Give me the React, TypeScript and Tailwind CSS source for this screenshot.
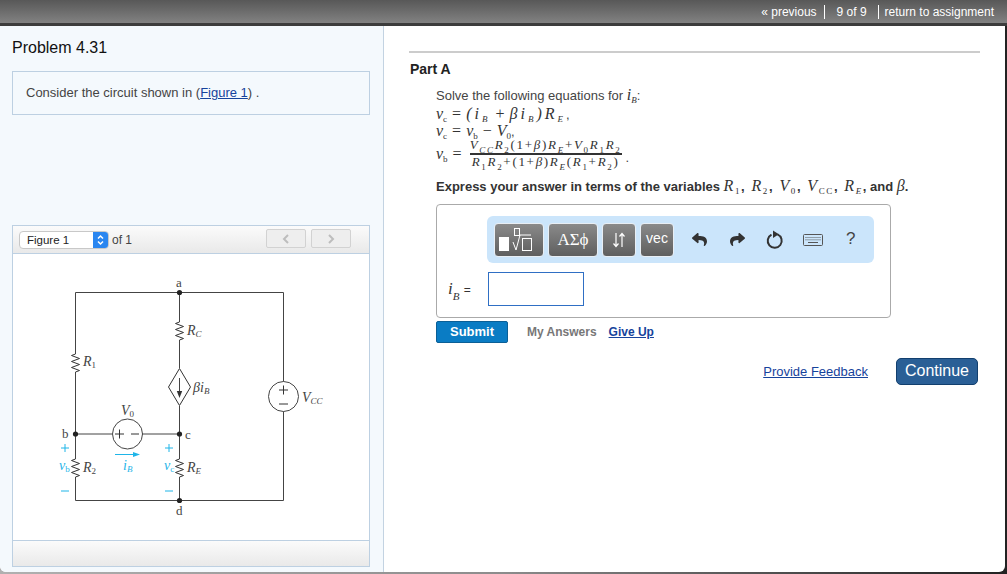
import { ReactNode } from "react";
import { FaReply, FaShare } from "react-icons/fa";

const serif = "font-['Liberation_Serif',serif]";

function V({ children, sub, upright }: { children: ReactNode; sub?: string; upright?: boolean }) {
  return (
    <span className={`${serif} italic font-normal text-[16px] text-[#333]`}>
      {children}
      {sub && <sub className={`text-[9px] align-[-1px] leading-none ${upright ? "not-italic" : ""}`}>{sub}</sub>}
    </span>
  );
}

function Op({ children }: { children: ReactNode }) {
  return <span className={`${serif} text-[16px] text-[#333] mx-[5px]`}>{children}</span>;
}

function S({ children, upright }: { children: ReactNode; upright?: boolean }) {
  return <sub className={`text-[9px] align-[-2px] leading-none ${upright ? "not-italic" : ""}`}>{children}</sub>;
}

function Resistor({ x, y }: { x: number; y: number }) {
  return (
    <path
      d={`M${x} ${y} l-4 1.5 l8 3 l-8 3 l8 3 l-8 3 l8 3 l-4 1.5`}
      fill="none"
      stroke="#333"
      strokeWidth="1"
    />
  );
}

function Circuit() {
  const it = { fontFamily: "'Liberation Serif', serif", fontStyle: "italic" as const };
  const rm = { fontFamily: "'Liberation Serif', serif", fontStyle: "normal" as const };
  const blue = "#1fb5e8";
  return (
    <svg viewBox="13 254 356 286" className="w-full h-full block">
      <g fill="none" stroke="#444" strokeWidth="1">
        <path d="M75.5 354V292.5H283.5V381.5M179.5 292.5V322M179.5 340V368M179.5 406V459M179.5 477V500.5M75.5 372V459M75.5 477V500.5H283.5V411.5M75.5 434H112M142 434H179.5" />
        <path d="M179.5 368.5L190.5 387L179.5 405.5L168.5 387Z" stroke="#333" />
        <circle cx="283.5" cy="396.5" r="15" />
        <circle cx="127.5" cy="434" r="15" />
        <path d="M179.5 378V394" />
      </g>
      <path d="M179.5 398L176.8 391H182.2Z" fill="#333" />
      <Resistor x={179.5} y={322} />
      <Resistor x={75.5} y={354} />
      <Resistor x={75.5} y={459} />
      <Resistor x={179.5} y={459} />
      <g fill="#222">
        <circle cx="179.5" cy="292.5" r="2.6" />
        <circle cx="75.5" cy="434" r="2.6" />
        <circle cx="179.5" cy="434" r="2.6" />
        <circle cx="179.5" cy="500.5" r="2.6" />
      </g>
      <path d="M115 454.5H134" stroke={blue} strokeWidth="1" />
      <path d="M140 454.5L133 452V457Z" fill={blue} />
      <g fontSize="13" fill="#444" style={rm}>
        <text x="176" y="287">a</text>
        <text x="62" y="438">b</text>
        <text x="185" y="439">c</text>
        <text x="176" y="515">d</text>
      </g>
      <g fill="#444" style={it} fontSize="14">
        <text x="187" y="335">R<tspan fontSize="9" dy="2">C</tspan></text>
        <text x="83" y="366">R<tspan fontSize="9" dy="2" style={rm}>1</tspan></text>
        <text x="193" y="392">βi<tspan fontSize="9" dy="2">B</tspan></text>
        <text x="302" y="402">V<tspan fontSize="9" dy="2">CC</tspan></text>
        <text x="121" y="415">V<tspan fontSize="9" dy="2" style={rm}>0</tspan></text>
        <text x="83" y="472">R<tspan fontSize="9" dy="2" style={rm}>2</tspan></text>
        <text x="187" y="472">R<tspan fontSize="9" dy="2">E</tspan></text>
      </g>
      <g fill={blue} style={it} fontSize="14">
        <text x="59" y="470">v<tspan fontSize="9" dy="2" style={rm}>b</tspan></text>
        <text x="164" y="470">v<tspan fontSize="9" dy="2" style={rm}>c</tspan></text>
        <text x="123" y="470">i<tspan fontSize="9" dy="2">B</tspan></text>
      </g>
      <g fill="none" stroke={blue} strokeWidth="1">
        <path d="M61 448H69M65 444V452M61 491H69M165 448H173M169 444V452M165 491H173" />
      </g>
      <g fill="none" stroke="#333" strokeWidth="1">
        <path d="M279 390H288M283.5 385.5V394.5M279 404H288M115 434H124M119.5 429.5V438.5M131 434H139" />
      </g>
    </svg>
  );
}

function ToolButton({ children, className }: { children: ReactNode; className: string }) {
  return (
    <div
      className={`h-[34px] rounded-[4px] border border-[#e8eef4] bg-gradient-to-b from-[#8a8a8a] to-[#5f5f5f] flex items-center justify-center text-white ${className}`}
    >
      {children}
    </div>
  );
}

export default function App() {
  return (
    <div className="w-[1007px] h-[574px] overflow-hidden bg-gradient-to-r from-[#b0b0b0] via-[#8c8c8c] to-[#222222] font-['Liberation_Sans',sans-serif]">
      <div className="h-[26px] flex items-center justify-end pr-[13px] bg-gradient-to-b from-[#585858] to-[#828282] border-b-[3px] border-[#3c3c3c] text-white text-[12px]">
        <span className="pr-[7px] border-r border-white leading-[14px]">« previous</span>
        <span className="pl-[12px] pr-[11px] border-r border-white leading-[14px]">9 of 9</span>
        <span className="pl-[6px] leading-[14px]">return to assignment</span>
      </div>
      <div className="w-[1005px] h-[546px] flex bg-white rounded-b-[6px] overflow-hidden">
        <div className="w-[384px] shrink-0 bg-[#f4f9fd] border-r border-[#c3d3e2] pl-[12px] pr-[13px] pt-[12px] pb-[5px] flex flex-col">
          <h1 className="text-[16px] leading-[20px] text-[#111]">Problem 4.31</h1>
          <div className="mt-[13px] h-[44px] border border-[#bdd0e2] pl-[13px] pt-[13px] text-[13px] leading-[15px] text-[#444]">
            Consider the circuit shown in (<a className="text-[#16439c] underline">Figure 1</a>) .
          </div>
          <div className="mt-[110px] flex-1 flex flex-col border border-[#bdd0e2] min-h-0">
            <div className="h-[28px] shrink-0 flex items-center pl-[6px] pr-[18px] border-b border-[#bdd0e2] bg-gradient-to-b from-[#fbfbfb] to-[#e9e9e9]">
              <div className="w-[90px] h-[18px] flex rounded-[4px] border border-[#c8c8c8] bg-white overflow-hidden">
                <span className="flex-1 pl-[7px] text-[11.5px] leading-[17px] text-[#222]">Figure 1</span>
                <span className="w-[15px] bg-[#2a86f0] flex items-center justify-center">
                  <svg width="9" height="12" viewBox="0 0 9 12" fill="none" stroke="white" strokeWidth="1.5">
                    <path d="M2 4.5L4.5 2L7 4.5M2 7.5L4.5 10L7 7.5" />
                  </svg>
                </span>
              </div>
              <span className="ml-[3px] text-[12px] text-[#444]">of 1</span>
              <div className="ml-auto flex gap-[5px] -mt-[2px]">
                <div className="w-[40px] h-[19px] rounded-[2px] border border-[#d2d2d2] bg-[#eeeeee] flex items-center justify-center">
                  <svg width="8" height="10" viewBox="0 0 8 10" fill="none" stroke="#bdbdbd" strokeWidth="2"><path d="M6 1L2 5L6 9" /></svg>
                </div>
                <div className="w-[40px] h-[19px] rounded-[2px] border border-[#d2d2d2] bg-[#eeeeee] flex items-center justify-center">
                  <svg width="8" height="10" viewBox="0 0 8 10" fill="none" stroke="#bdbdbd" strokeWidth="2"><path d="M2 1L6 5L2 9" /></svg>
                </div>
              </div>
            </div>
            <div className="h-[286px] bg-white">
              <Circuit />
            </div>
            <div className="flex-1 border-t border-[#bdd0e2] bg-gradient-to-b from-[#fbfbfb] to-[#e9e9e9]" />
          </div>
        </div>

        <div className="flex-1 pl-[25px] pr-[25px] pt-[25px]">
          <div className="h-[2px] bg-[#cccccc]" />
          <h2 className="mt-[8px] ml-[1px] text-[14px] leading-[16px] font-bold text-[#222]">Part A</h2>
          <div className="mt-[9px] ml-[27px] text-[13px] text-[#444]">
            <div className="h-[19px] leading-[18px]">
              Solve the following equations for <V sub="B">i</V>:
            </div>
            <div className="h-[18px] leading-[18px] whitespace-nowrap">
              <V sub="c" upright>v</V><Op>=</Op><span className="tracking-[3px]"><V>(</V><V sub="B">i</V></span><Op>+</Op><span className="tracking-[3px]"><V sub="B">βi</V><V>)</V><V sub="E">R</V></span>,
            </div>
            <div className="h-[15px] leading-[15px] whitespace-nowrap">
              <V sub="c" upright>v</V><Op>=</Op><V sub="b" upright>v</V><Op>−</Op><V sub="0" upright>V</V>,
            </div>
            <div className="flex items-center h-[32px]">
              <V sub="b" upright>v</V>
              <Op>=</Op>
              <div className={`${serif} ml-[3px] -mt-[1px] italic text-[13px] tracking-[1.7px] leading-[14px] text-[#333] text-center`}>
                <div className="border-b-2 border-[#333] whitespace-nowrap">
                  V<S>CC</S>R<S upright>2</S><span className="not-italic">(1+</span>β<span className="not-italic">)</span>R<S>E</S><span className="not-italic">+</span>V<S upright>0</S>R<S upright>1</S>R<S upright>2</S>
                </div>
                <div className="whitespace-nowrap">
                  R<S upright>1</S>R<S upright>2</S><span className="not-italic">+(1+</span>β<span className="not-italic">)</span>R<S>E</S><span className="not-italic">(</span>R<S upright>1</S><span className="not-italic">+</span>R<S upright>2</S><span className="not-italic">)</span>
                </div>
              </div>
              <span className="ml-[4px] mt-[8px]">.</span>
            </div>
            <div className="mt-[6px] h-[20px] leading-[20px] font-bold text-[#333] whitespace-nowrap">
              Express your answer in terms of the variables <span className="tracking-[1.6px]"><V sub="1" upright>R</V>, <V sub="2" upright>R</V>, <V sub="0" upright>V</V>, <V sub="CC" upright>V</V>, <V sub="E">R</V></span>, and <V>β</V>.
            </div>

            <div className="mt-[8px] w-[455px] h-[114px] border border-[#aaaaaa] rounded-[4px] pt-[11px]">
              <div className="ml-[50px] w-[387px] h-[47px] rounded-[6px] bg-[#cbe5fb] flex items-center pl-[7px]">
                <ToolButton className="w-[50px] gap-[3px]">
                  <svg width="42" height="26" viewBox="0 0 42 26" fill="none" stroke="white" strokeWidth="1">
                    <rect x="1" y="10" width="10" height="14" fill="white" stroke="none" />
                    <rect x="16.5" y="1.5" width="5" height="7" />
                    <path d="M15 15L18 23L22 8H33" />
                    <rect x="24.5" y="11.5" width="9" height="12" />
                  </svg>
                </ToolButton>
                <ToolButton className={`ml-[4px] w-[50px] ${serif} text-[17px]`}>ΑΣϕ</ToolButton>
                <ToolButton className="ml-[4px] w-[34px]">
                  <svg width="14" height="16" viewBox="0 0 14 16" fill="none" stroke="white" strokeWidth="1.2">
                    <path d="M4 1V14M1.5 11.5L4 14.5L6.5 11.5M10 15V2M7.5 4.5L10 1.5L12.5 4.5" />
                  </svg>
                </ToolButton>
                <ToolButton className="ml-[4px] w-[34px] text-[14px] pb-[3px]">vec</ToolButton>
                <div className="ml-[17px] w-[16px] flex justify-center text-[#333]"><FaReply size={15} /></div>
                <div className="ml-[22px] w-[16px] flex justify-center text-[#333]"><FaShare size={15} /></div>
                <svg className="ml-[21px]" width="18" height="20" viewBox="0 0 18 20" fill="none" stroke="#333" strokeWidth="2">
                  <path d="M11.5 4.4A7 7 0 1 1 5.5 4.6" />
                  <path d="M7 0.5L12.8 4.3L7 8Z" fill="#333" stroke="none" />
                </svg>
                <svg className="ml-[19px]" width="20" height="12" viewBox="0 0 20 12" fill="none" stroke="#555">
                  <rect x="0.5" y="0.5" width="19" height="11" rx="1" />
                  <path d="M2.5 3.5H17.5M2.5 5.8H17.5" strokeDasharray="1 1" />
                  <path d="M5 8.5H15" />
                </svg>
                <span className="ml-[23px] text-[17px] text-[#444] -mt-[2px]">?</span>
              </div>
              <div className="mt-[9px] flex items-center">
                <span className={`ml-[11px] w-[40px] ${serif} italic text-[17px] text-[#333]`}>
                  i<sub className="text-[11px] align-[-3px] leading-none">B</sub> <span className="not-italic font-['Liberation_Sans',sans-serif] text-[12px]">=</span>
                </span>
                <div className="w-[96px] h-[34px] border border-[#2f6fc4] bg-white" />
              </div>
            </div>

            <div className="mt-[3px] flex items-center">
              <div className="w-[72px] h-[22px] rounded-[2px] bg-[#0a7cc4] border border-[#0b5f96] text-white text-[13px] font-bold leading-[20px] text-center">Submit</div>
              <span className="ml-[19px] text-[12px] font-bold text-[#777]">My Answers</span>
              <a className="ml-[12px] text-[12px] font-bold text-[#16439c] underline">Give Up</a>
            </div>
            <div className="mt-[15px] flex items-center justify-end pr-[2px]">
              <a className="text-[13px] text-[#16439c] underline">Provide Feedback</a>
              <div className="ml-[28px] w-[82px] h-[27px] rounded-[5px] bg-[#2a5f96] border border-[#123f6e] text-white text-[16px] leading-[24px] text-center">Continue</div>
            </div>
          </div>
        </div>
      </div>
    </div>
  );
}
